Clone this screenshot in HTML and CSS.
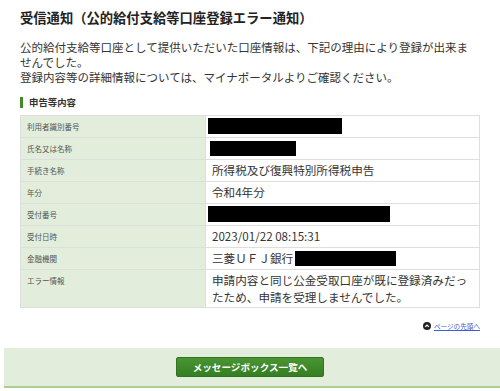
FILE: index.html
```html
<!DOCTYPE html>
<html lang="ja">
<head>
    <meta charset="UTF-8">
    <meta name="viewport" content="width=device-width, initial-scale=1.0">
    <title>受信通知</title>
    <link rel="stylesheet" href="styles.css">
</head>
<body>
    <div class="page">
        <h1 class="title">受信通知（公的給付支給等口座登録エラー通知）</h1>
        <p class="lead">公的給付支給等口座として提供いただいた口座情報は、下記の理由により登録が出来ませんでした。<br>登録内容等の詳細情報については、マイナポータルよりご確認ください。</p>

        <h2 class="section">申告等内容</h2>
        <table class="detail">
            <tr>
                <th>利用者識別番号</th>
                <td><span class="redact w134"></span></td>
            </tr>
            <tr>
                <th>氏名又は名称</th>
                <td><span class="redact w86 shift"></span></td>
            </tr>
            <tr>
                <th>手続き名称</th>
                <td>所得税及び復興特別所得税申告</td>
            </tr>
            <tr>
                <th>年分</th>
                <td>令和4年分</td>
            </tr>
            <tr>
                <th>受付番号</th>
                <td><span class="redact w182"></span></td>
            </tr>
            <tr>
                <th>受付日時</th>
                <td>2023/01/22 08:15:31</td>
            </tr>
            <tr>
                <th>金融機関</th>
                <td>三菱ＵＦＪ銀行<span class="redact w101 inline"></span></td>
            </tr>
            <tr>
                <th>エラー情報</th>
                <td class="multi">申請内容と同じ公金受取口座が既に登録済みだったため、申請を受理しませんでした。</td>
            </tr>
        </table>

        <div class="pagetop">
            <a href="#">
                <svg width="8" height="8" viewBox="0 0 8 8"><circle cx="4" cy="4" r="4" fill="#222"/><path d="M2.2 4.9 L4 3.1 L5.8 4.9" stroke="#fff" stroke-width="1.3" fill="none"/></svg>
                <span>ページの先頭へ</span>
            </a>
        </div>
    </div>

    <div class="footer">
        <button class="btn">メッセージボックス一覧へ</button>
    </div>
</body>
</html>
```

FILE: styles.css
```css
body {
    margin: 0;
    font-family: "Noto Sans CJK JP", "Noto Sans", sans-serif;
    color: #333;
    background: #fff;
}

.page {
    padding: 8px 20px 0 20px;
}

.title {
    margin: 0;
    font-size: 13.3px;
    line-height: 20px;
    font-weight: bold;
    color: #222;
}

.lead {
    margin: 12px 0 0;
    padding-right: 8px;
    font-size: 11.5px;
    line-height: 15px;
    color: #333;
}

.section {
    margin: 11px 0 0;
    display: flex;
    align-items: center;
    gap: 6px;
    font-size: 9.4px;
    line-height: 12px;
    font-weight: bold;
    color: #333;
}
.section::before {
    content: "";
    width: 3px;
    height: 11px;
    background: #3f8a2b;
}

.detail {
    margin-top: 7px;
    width: 100%;
    border-collapse: collapse;
}
.detail th,
.detail td {
    border: 1px solid #dedede;
    vertical-align: top;
    text-align: left;
    padding: 2px 6px;
}
.detail th {
    width: 172px;
    background: #e2eedb;
    font-size: 7.5px;
    line-height: 17px;
    font-weight: normal;
    color: #555;
}
.detail td {
    font-size: 11.6px;
    line-height: 17px;
    color: #333;
}
.detail td.multi {
    padding-bottom: 1px;
}

.redact {
    display: inline-block;
    height: 16px;
    background: #000;
    vertical-align: top;
    margin-left: -4px;
}
.redact.shift { margin-left: -2px; height: 15px; margin-top: 1px; }
.redact.inline { margin-left: 2px; height: 15px; margin-top: 1px; }
.w134 { width: 134px; }
.w86 { width: 86px; }
.w182 { width: 182px; }
.w101 { width: 101px; }

.pagetop {
    display: flex;
    justify-content: flex-end;
    margin-top: 13px;
}
.pagetop a {
    display: flex;
    align-items: center;
    gap: 3px;
    font-size: 6.6px;
    line-height: 10px;
    color: #3a5fcd;
}

.footer {
    margin: 17px 0 0 4px;
    padding: 9px 4px 9px 0;
    background: #e2eedb;
    border-bottom: 2px solid #a9d08f;
    display: flex;
    justify-content: center;
}

.btn {
    width: 148px;
    height: 20px;
    border: 1px solid #2f7420;
    border-radius: 2px;
    background: linear-gradient(#4a9432, #357e22);
    color: #fff;
    font-family: "Noto Sans CJK JP", "Noto Sans", sans-serif;
    font-size: 9.6px;
    font-weight: bold;
    padding: 0;
}
```
